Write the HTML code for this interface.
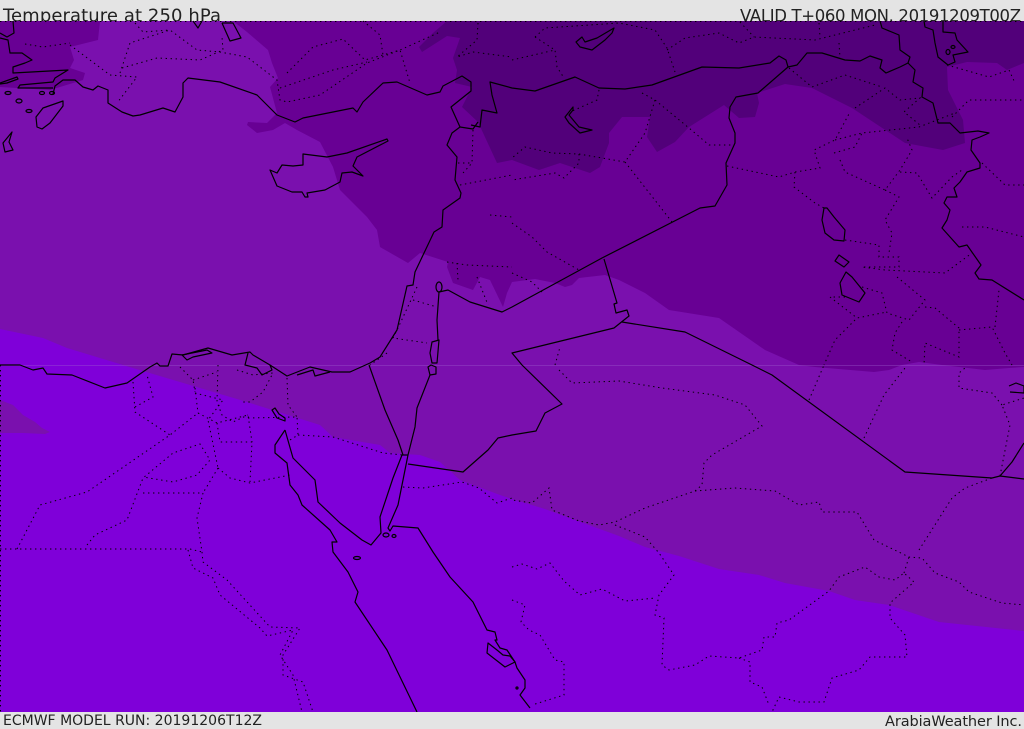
<!DOCTYPE html>
<html><head><meta charset="utf-8"><title>Temperature at 250 hPa</title>
<style>
html,body{margin:0;padding:0;background:#e4e4e4;overflow:hidden}
svg{display:block}
text{font-family:"DejaVu Sans","Liberation Sans",sans-serif;fill:#222}
.s{fill:none;stroke:#000;stroke-width:1.2;stroke-linejoin:round}
.d{fill:none;stroke:#000;stroke-width:1;stroke-dasharray:1.4 3.6}
</style></head><body>
<svg width="1024" height="729" viewBox="0 0 1024 729" xmlns="http://www.w3.org/2000/svg">
<rect width="1024" height="729" fill="#e4e4e4"/>
<text x="3" y="21.5" font-size="18" textLength="218">Temperature at 250 hPa</text>
<text x="740" y="21.5" font-size="16.5" textLength="281">VALID T+060 MON. 20191209T00Z</text>

<rect x="0" y="21" width="1024" height="691" fill="#7a10ae"/>
<!-- dark band 1 -->
<polygon fill="#680094" points="233,21 247,32 268,50 272,63 278,78 270,87 277,113 267,123 248,122 247,125 257,133 273,130 285,123 297,130 320,142 333,167 340,190 367,217 377,230 380,247 408,263 420,253 448,262 447,267 453,283 473,290 480,277 490,280 503,307 507,293 512,282 535,279 555,283 565,287 572,285 579,278 605,275 619,280 645,293 669,310 719,318 765,350 799,365 815,367 874,372 889,370 902,365 919,362 942,365 985,370 1009,368 1024,367 1024,21"/>
<polygon fill="#680094" points="0,21 100,21 98,40 70,47 74,60 70,68 85,73 83,80 50,90 0,87"/>
<!-- dark band 2 -->
<polygon fill="#52007a" points="447,21 433,33 419,47 422,52 447,36 460,38 453,58 457,70 455,83 472,87 462,107 478,122 497,163 512,160 539,170 560,163 590,173 600,167 609,143 609,133 622,117 650,117 647,137 657,152 675,142 689,127 724,105 739,118 755,117 759,103 757,93 785,84 812,88 852,108 905,143 943,150 965,143 963,120 948,90 947,67 967,62 997,63 1007,70 1024,63 1024,21"/>
<!-- bright band -->
<polygon fill="#7f00d9" points="0,329 43,338 67,348 123,365 247,402 320,425 333,437 380,445 390,453 420,455 440,462 460,480 500,495 512,499 545,509 619,536 645,547 679,556 719,569 759,575 785,583 829,591 855,600 889,605 939,622 1024,631 1024,712 0,712"/>
<polygon fill="#7a10ae" points="0,400 13,405 23,415 35,422 42,428 50,432 45,434 23,433 0,433"/>
<rect x="0" y="365" width="1024" height="1" fill="#a060d0" opacity=".35"/>

<!-- dotted borders -->
<g class="d">
<polyline points="70,45 110,75 137,77 117,103"/>
<polyline points="120,73 130,43 170,30 197,50 220,52 247,57 277,80 280,100 287,102 320,95 367,63 400,50 410,83"/>
<polyline points="122,68 157,58 200,60 223,50 222,37"/>
<polyline points="135,23 143,32 170,30"/>
<polyline points="287,73 313,47 343,39 365,60 383,55 400,50 440,32"/>
<polyline points="363,21 380,35 383,55"/>
<polyline points="280,88 333,70 367,62"/>
<polyline points="25,44 43,47 70,43"/>
<polyline points="478,23 477,40 457,57 473,52 512,57"/>
<polyline points="473,130 472,163 463,173"/>
<polyline points="458,163 473,163"/>
<polyline points="460,185 512,175"/>
<polyline points="490,215 512,217"/>
<polyline points="447,262 467,265 512,267"/>
<polyline points="457,263 458,280"/>
<polyline points="477,277 488,305"/>
<polyline points="417,287 398,328 393,338 427,343"/>
<polyline points="413,300 437,307"/>
<polyline points="387,353 370,365"/>
<polyline points="512,60 555,50 557,67 564,78"/>
<polyline points="535,37 545,28 619,23 655,30 667,48 675,72"/>
<polyline points="667,50 685,38 719,33 739,43 754,37 815,40 875,25"/>
<polyline points="740,22 754,37"/>
<polyline points="535,37 555,50"/>
<polyline points="819,23 820,37"/>
<polyline points="839,43 840,58"/>
<polyline points="789,68 812,87 845,75 882,87"/>
<polyline points="599,90 597,100 570,112"/>
<polyline points="642,93 655,100 689,128 709,145 734,145"/>
<polyline points="655,100 645,133 625,162 579,154 552,153 525,147 512,158"/>
<polyline points="579,154 579,163 564,178 555,173 512,180"/>
<polyline points="625,162 672,222"/>
<polyline points="727,166 779,177 795,172 820,168 814,150 835,140 850,112"/>
<polyline points="835,140 862,133 919,127 955,113"/>
<polyline points="834,153 855,147 862,133"/>
<polyline points="840,160 845,172 885,190 900,170 912,150 907,138"/>
<polyline points="795,172 794,187 815,203 824,208"/>
<polyline points="885,190 899,197 885,220 892,233 889,253"/>
<polyline points="900,172 917,173 932,198 952,177 962,170"/>
<polyline points="982,163 1005,185 1024,185"/>
<polyline points="855,108 885,88 900,100 920,98 904,112 920,125"/>
<polyline points="952,117 969,100 1024,100"/>
<polyline points="947,65 989,77 1009,70 1015,83"/>
<polyline points="512,223 532,237 547,252 579,270"/>
<polyline points="512,273 532,282 542,292"/>
<polyline points="845,240 879,245 879,257 899,257 899,267 862,267 885,270 945,273 972,253"/>
<polyline points="962,227 985,227 1024,237"/>
<polyline points="897,277 925,300 909,320 887,313 882,293 862,287"/>
<polyline points="845,297 830,297 857,318 887,312"/>
<polyline points="925,307 935,308 959,328 959,357 925,343 924,365"/>
<polyline points="902,322 895,333 892,350 912,362"/>
<polyline points="855,320 835,340 824,365"/>
<polyline points="959,330 992,327 1005,353 1012,365"/>
<polyline points="995,327 999,290"/>
<polyline points="555,365 560,347"/>
<polyline points="559,370 572,383 619,381 662,388 715,395 745,405 762,426 712,455 704,463 702,485 695,491 645,508 615,522 599,525 579,521 552,510 549,488 532,503 512,500"/>
<polyline points="695,491 735,488 775,491 799,505 819,502 822,512 857,512 874,540 909,557 922,558 935,573 959,582 969,592 1002,603 1024,605"/>
<polyline points="615,525 645,537 659,553 674,575 659,595 655,615 664,618 662,665 669,670 695,665 709,656 739,658 762,650 764,637 775,637 777,623 789,620 829,591 839,577 865,567 879,577 895,580 904,573 914,582 890,603 890,618 905,635 907,657 870,657 859,670 832,678 824,702 799,702 779,697 772,712"/>
<polyline points="739,658 750,662 750,682 762,687 769,705"/>
<polyline points="904,573 909,557"/>
<polyline points="919,550 952,498 965,488 992,478"/>
<polyline points="809,400 824,365"/>
<polyline points="864,438 884,395 905,368"/>
<polyline points="1000,476 1010,425 1002,405 1024,398"/>
<polyline points="1002,405 992,393 959,388 959,373 965,368"/>
<polyline points="512,567 522,564 537,569 550,563 564,581 580,595 602,589 625,601 655,598"/>
<polyline points="512,600 525,605 521,622 529,630 540,635 555,660 564,662 564,695 532,705"/>
<polyline points="403,487 423,488 462,482 479,488 497,503 512,498"/>
<polyline points="0,549 190,549 202,552"/>
<polyline points="17,549 40,505 87,492 170,435 198,413"/>
<polyline points="87,545 95,535 127,520 143,478 173,453 200,444 210,460 197,475 173,482 143,477"/>
<polyline points="143,493 203,493 197,518 202,552 203,562 227,580 270,627 300,628 283,655 283,675 303,682 313,712"/>
<polyline points="188,550 193,568 213,578 220,595 260,628 267,636 293,630 280,655 293,675 302,712"/>
<polyline points="218,468 203,493"/>
<polyline points="218,468 230,478 250,483 290,475"/>
<polyline points="217,423 220,442 252,442 250,482"/>
<polyline points="198,413 217,423 248,415 252,442"/>
<polyline points="248,418 297,417 298,435 290,440"/>
<polyline points="298,435 333,437 383,453 403,455"/>
<polyline points="133,382 135,412 170,435"/>
<polyline points="135,407 153,397 147,375"/>
<polyline points="195,388 198,413"/>
<polyline points="195,393 223,400 208,420 218,468"/>
<polyline points="218,365 217,402 222,415 233,422 248,415"/>
<polyline points="180,367 193,380 195,392"/>
<polyline points="193,380 217,372"/>
<polyline points="237,370 253,375 273,373 263,392 250,402 243,402"/>
<polyline points="287,378 288,405 297,417"/>
<line x1="0.5" y1="365" x2="0.5" y2="712"/>
<line x1="0" y1="21.5" x2="1024" y2="21.5"/>
</g>

<!-- solid coasts and borders -->
<g class="s">
<polyline points="13,21 14,33 7,37 0,33"/>
<polyline points="0,38 8,40 10,53 22,53 32,60 25,63 13,67 13,73 68,70 55,78 53,82 20,85 18,88 53,88"/>
<polyline points="0,83 17,77 18,79 7,83 0,84"/>
<polyline points="53,94 55,86 63,80 75,80 83,87 93,90 98,86 108,90 108,103 122,112 133,116 140,115 163,108 175,112 183,97 183,83 188,78 220,82 257,95 277,115 295,122 303,118 353,108 357,112 363,102 383,83 397,82 427,95 440,92 443,86 462,76 471,82 471,91 451,107 460,127 452,133 447,145 457,157 455,180 461,193 460,198 443,210 442,227 434,232 415,272 413,285 407,286 397,330 380,357 370,363 350,372 332,372 310,367 287,376 270,365 253,355 250,352 232,355 208,348 183,355 172,354 168,366 160,366 157,363 150,367 127,383 105,388 72,375 47,374 43,368 33,370 20,365 0,365"/>
<polyline points="248,353 245,365 257,368 262,375 272,370 270,365"/>
<polygon points="182,355 207,350 212,353 193,357 187,360"/>
<polyline points="297,375 313,370 315,376 330,372"/>
<polygon points="303,154 303,165 293,166 282,165 277,173 270,170 277,186 292,192 302,192 305,197 308,197 307,193 325,190 340,182 342,173 352,172 363,176 353,166 357,157 388,141 387,139 347,153 327,157"/>
<polygon points="63,101 43,108 36,117 37,127 42,129 50,123 63,106"/>
<polygon points="12,132 3,143 5,152 13,150 9,142"/>
<polyline points="193,21 198,28 202,21"/>
<polyline points="222,23 230,41 241,38 233,23 222,23"/>
<ellipse cx="8" cy="93" rx="3" ry="1.5"/><ellipse cx="19" cy="101" rx="3" ry="2"/><ellipse cx="29" cy="111" rx="3" ry="1.5"/><ellipse cx="42" cy="93" rx="2.5" ry="1.5"/><ellipse cx="52" cy="93" rx="2.5" ry="1.5"/>
<ellipse cx="439" cy="287" rx="3" ry="5"/>
<polyline points="439,292 437,320 438,340"/>
<polygon points="430,353 432,342 439,340 437,363 432,363"/>
<polygon points="428,367 431,365 436,367 436,374 430,375"/>
<polyline points="430,375 417,408 415,427 408,455"/>
<polyline points="369,365 385,410 398,440 403,455"/>
<polyline points="439,292 448,290 470,302 502,312 512,307 602,258 700,208 715,206 727,185 726,163 735,143 735,133 729,118 730,107 736,97 758,93 788,67"/>
<polyline points="604,259 617,303 614,304 616,313 627,310 629,316 614,328 512,353 522,365 562,404 545,413 536,431 512,435 498,438 488,450 463,472 408,464"/>
<polyline points="622,322 685,332 752,365 772,375 905,472 992,478 1000,476 1024,479"/>
<polyline points="1000,476 1012,462 1024,443"/>
<polyline points="471,125 480,127 482,110 497,113 492,95 490,82 512,88 535,91 575,77 599,88 625,89 652,85 702,67 739,68 770,63 779,56 786,60 788,67 797,65 807,53 822,53 845,60 860,61 870,56 882,60 880,68 886,73 900,67 908,63 915,70 913,82 923,88 922,97 933,103 938,123 950,123 960,133 978,131 989,133 980,137 972,140 971,150 980,163 980,168 967,172 960,182 954,188 957,197 947,197 944,203 950,210 947,220 942,228 959,247 967,245 981,265 975,273 979,279 992,280 1024,300"/>
<polyline points="460,127 473,129 478,122"/>
<polyline points="880,21 882,28 899,35 900,50 910,57 908,63"/>
<polyline points="924,21 925,27 933,30 935,43 938,57 948,65 955,62 953,55 968,52 957,40 955,33 943,32 943,21"/>
<ellipse cx="948" cy="52" rx="2" ry="2.5"/><ellipse cx="953" cy="47" rx="2" ry="1.5"/>
<polygon points="576,42 582,37 585,42 597,38 614,28 612,33 605,40 592,50 580,47"/>
<polygon points="573,107 565,117 569,123 580,133 592,130 579,127 569,115 573,110"/>
<polygon points="824,208 822,220 825,233 834,240 844,241 845,230 834,217 827,208"/>
<polygon points="839,255 835,261 844,267 849,262"/>
<polygon points="846,272 840,283 842,295 859,302 865,293 852,277"/>
<polyline points="285,430 275,445 275,453 287,463 290,485 298,495 302,505 330,530 337,542 332,542 333,552 348,572 358,592 355,602 387,650 417,712"/>
<polyline points="285,430 293,458 315,480 318,502 340,523 362,540 371,545 381,533 380,517 393,478 402,455 408,455 398,505 388,528 390,531 393,526 418,528 433,552 450,577 473,602 482,620 487,630 495,632 497,640 495,640 500,648 507,650 515,662 517,668 525,680 525,688 520,695 530,708"/>
<polygon points="488,643 487,653 505,667 515,662 510,656 503,655 497,650"/>
<ellipse cx="386" cy="535" rx="3" ry="2"/><ellipse cx="394" cy="536" rx="2" ry="1.5"/><ellipse cx="357" cy="558" rx="3.5" ry="1.5"/><ellipse cx="517" cy="688" rx="1" ry="1"/>
<polygon points="272,410 275,408 279,414 285,418 285,421 277,418"/>
<polyline points="1009,386 1016,383 1024,386 1024,393 1010,392"/>
</g>
<rect x="0" y="712" width="1024" height="17" fill="#e4e4e4"/>
<text x="3" y="725" font-size="14" textLength="259">ECMWF MODEL RUN: 20191206T12Z</text>
<text x="885" y="726" font-size="14.5" textLength="137">ArabiaWeather Inc.</text>
</svg>
</body></html>
